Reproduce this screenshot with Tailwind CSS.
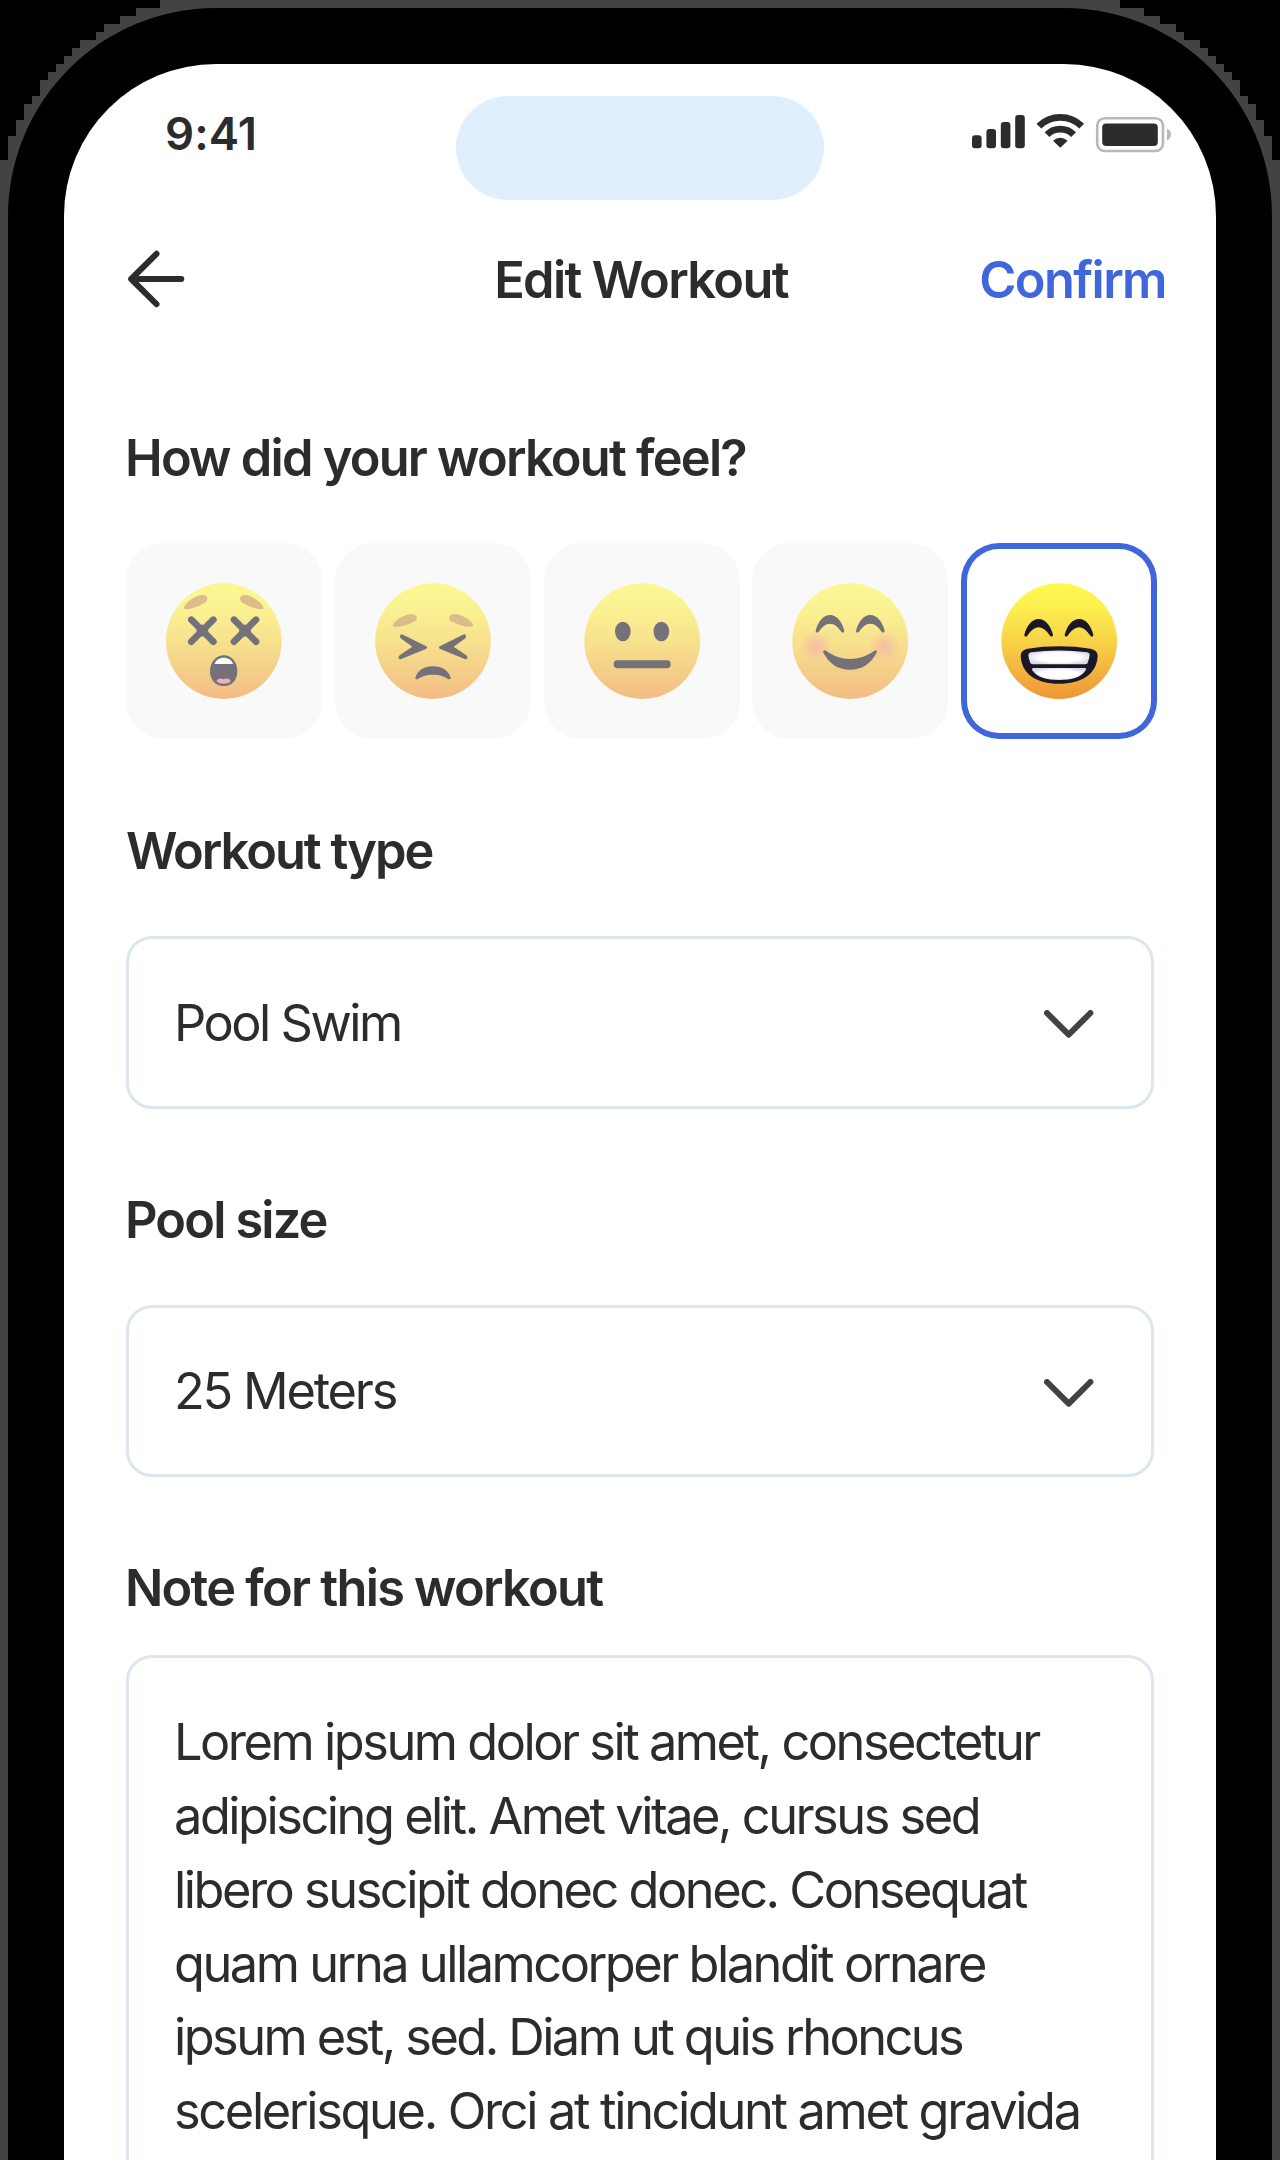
<!DOCTYPE html>
<html lang="en">
<head>
<meta charset="utf-8">
<title>Edit Workout</title>
<script src="https://cdn.jsdelivr.net/npm/@tailwindcss/browser@4"></script>
</head>
<body class="bg-black">
<div class="relative h-[2160px] w-[1280px] overflow-hidden bg-black font-['Inter',sans-serif] text-[50.5px] leading-[74px] whitespace-nowrap text-[#2c2c2c]">
  <!-- stepped outer edge of the device -->
  <svg class="absolute inset-0" width="1280" height="2160" viewBox="0 0 1280 2160" fill="#434343" shape-rendering="crispEdges">
    <path d="M160 0V8H136V16H120V24H104V32H96V40H80V48H72V56H64V64H56V72H48V80H40V96H32V104H24V120H16V136H8V160H0V2160H1280V160H1272V136H1264V120H1256V104H1248V96H1240V80H1232V72H1224V64H1216V56H1208V48H1200V40H1184V32H1176V24H1160V16H1144V8H1120V0Z"/>
  </svg>
  <div class="relative h-[2300px] p-2">
    <div class="h-full rounded-t-[208px] bg-black p-14">
      <main class="flex h-full flex-col rounded-t-[152px] bg-white pt-8">

        <div class="grid h-[104px] grid-cols-[392px_368px_1fr]">
          <span class="pl-[101px] text-[45.5px] leading-[75px] font-semibold tracking-[0.1px]">9:41</span>
          <div class="rounded-full bg-[#dfeffc]"></div>
          <svg class="mt-4 ml-[146px]" width="204" height="42" viewBox="970 112 204 42">
            <g fill="#2c2c2c">
              <rect x="972" y="135.2" width="9.6" height="13" rx="3"/>
              <rect x="986.4" y="129" width="9.6" height="19.2" rx="3"/>
              <rect x="1000.8" y="122" width="9.6" height="26.2" rx="3"/>
              <rect x="1015.2" y="115" width="9.6" height="33.2" rx="3"/>
              <rect x="1102.2" y="123.4" width="55.6" height="22.6" rx="4"/>
              <path d="M1060.3 147.8L1053 140.7Q1060.3 134.6 1067.6 140.7Z"/>
            </g>
            <g fill="none" stroke="#2c2c2c" stroke-width="6.8">
              <path d="M1038.9 126.1A30.6 30.6 0 0 1 1081.7 126.1"/>
              <path d="M1047 134.6A19 19 0 0 1 1073.6 134.6"/>
            </g>
            <rect x="1097.2" y="118.2" width="65.8" height="32.8" rx="7.5" fill="none" stroke="#b9b9b9" stroke-width="2.6"/>
            <path d="M1167 128.5Q1171 130.5 1171 134.5T1167 140.5Z" fill="#b9b9b9"/>
          </svg>
        </div>

        <header class="mt-[43px] grid grid-cols-[1fr_auto_1fr] items-center pr-[50px] pl-[52px]">
          <svg class="-mt-[2px] ml-[10px]" width="62" height="62" viewBox="126 248 62 62" fill="none" stroke="#2c2c2c" stroke-width="6" stroke-linecap="round" stroke-linejoin="round">
            <path d="M181.3 279H131.2M156.5 253.8L131.2 279L156.5 304.2"/>
          </svg>
          <h1 class="font-[560] tracking-[-1.65px]">Edit Workout</h1>
          <span class="justify-self-end font-[560] tracking-[-1.6px] text-[#4066db]">Confirm</span>
        </header>

        <section class="mt-[104px] flex flex-col pr-[59px] pl-[62px]">
          <h2 class="-ml-px font-[580] tracking-[-1.76px]">How did your workout feel?</h2>
          <div class="mt-[48px] flex h-[197px] items-start justify-between">
            <div class="size-[196px] rounded-[38px] bg-[#f9f9f9]">
              <svg class="size-full opacity-60" viewBox="48 70 588 588">
                <defs>
                  <linearGradient id="face" x1="0" y1="0" x2="0" y2="1">
                    <stop offset="0" stop-color="#fff84d"/>
                    <stop offset=".2" stop-color="#fcf04f"/>
                    <stop offset=".5" stop-color="#f7d347"/>
                    <stop offset=".78" stop-color="#f2b03f"/>
                    <stop offset="1" stop-color="#ef9536"/>
                  </linearGradient>
                </defs>
                <circle cx="341.5" cy="364.5" r="173.5" fill="url(#face)"/>
                <g fill="#cb9443">
                  <path d="M222 266C219 256 250 229 275 226C292 225 296 238 288 246C275 258 228 275 222 266Z"/>
                  <path d="M460 266C463 256 432 229 407 226C390 225 386 238 394 246C407 258 454 275 460 266Z"/>
                </g>
                <path d="M244 300L310 366M310 300L244 366M372 300L438 366M438 300L372 366" stroke="#1c1724" stroke-width="20" stroke-linecap="round"/>
                <path d="M277 314L296 333L277 352L258 333ZM405 314L424 333L405 352L386 333Z" fill="#1c1724"/>
                <path d="M341.5 407C366 407 382 428 382 455C382 482 366 499 341.5 499C317 499 300 482 300 455C300 428 317 407 341.5 407Z" fill="#1c1724"/>
                <path d="M314 433C320 408 362 408 369 433Z" fill="#fff"/>
                <path d="M320 485C322 475 334 475 341 479C348 475 360 475 362 485C356 495 326 495 320 485Z" fill="#ee7f94"/>
              </svg>
            </div>
            <div class="size-[196px] rounded-[38px] bg-[#f9f9f9]">
              <svg class="size-full opacity-60" viewBox="674 70 588 588">
                <circle cx="968" cy="364.5" r="173.5" fill="url(#face)"/>
                <g fill="#cb9443">
                  <path d="M848 319C845 309 876 285 902 283C919 283 924 296 916 303C902 313 855 328 848 319Z"/>
                  <path d="M1088 319C1091 309 1060 285 1034 283C1017 283 1012 296 1020 303C1034 313 1081 328 1088 319Z"/>
                </g>
                <g fill="#1c1724">
                  <path d="M878 345L948 380Q953 384 948 387L873 418Q866 420 865 415Q864 411 868 407L906 381L871 356Q867 351 870 346Q873 342 878 345Z"/>
                  <path d="M1058 345L988 380Q983 384 988 387L1063 418Q1070 420 1071 415Q1072 411 1068 407L1030 381L1065 356Q1069 351 1066 346Q1063 342 1058 345Z"/>
                  <path d="M915 475C921 453 940 440 968 440C996 440 1015 453 1021 475Q1020 481 1013 478C1000 469 988 465 968 465C948 465 936 469 923 478Q916 481 915 475Z"/>
                </g>
              </svg>
            </div>
            <div class="size-[196px] rounded-[38px] bg-[#f9f9f9]">
              <svg class="size-full opacity-60" viewBox="40 70 588 588">
                <circle cx="334.5" cy="364.5" r="173.5" fill="url(#face)"/>
                <g fill="#1c1724">
                  <ellipse cx="276.5" cy="335.5" rx="23.5" ry="29.5"/>
                  <ellipse cx="392" cy="335.5" rx="23.5" ry="29.5"/>
                  <rect x="249" y="422" width="171" height="23.5" rx="11"/>
                </g>
              </svg>
            </div>
            <div class="size-[196px] rounded-[38px] bg-[#f9f9f9]">
              <svg class="size-full opacity-60" viewBox="667 70 588 588">
                <defs>
                  <radialGradient id="blush">
                    <stop offset="0" stop-color="#f38a75" stop-opacity=".85"/>
                    <stop offset=".45" stop-color="#f38a75" stop-opacity=".45"/>
                    <stop offset="1" stop-color="#f38a75" stop-opacity="0"/>
                  </radialGradient>
                </defs>
                <circle cx="961.5" cy="364.5" r="173.5" fill="url(#face)"/>
                <circle cx="859" cy="380" r="50" fill="url(#blush)"/>
                <circle cx="1064" cy="380" r="50" fill="url(#blush)"/>
                <g fill="#1c1724">
                  <path d="M858 333C865 306 881 286 901 286C921 286 937 306 944 333Q944 341 936 338C925 322 914 312 901 312C888 312 877 322 866 338Q858 341 858 333Z"/>
                  <path d="M979 333C986 306 1002 286 1022 286C1042 286 1058 306 1065 333Q1065 341 1057 338C1046 322 1035 312 1022 312C1009 312 998 322 987 338Q979 341 979 333Z"/>
                  <path d="M880 396Q882 389 889 393C934 426 988 426 1034 393Q1041 389 1042 396C1026 431 997 450 961 450C925 450 896 431 880 396Z"/>
                </g>
              </svg>
            </div>
            <div class="size-[196px] rounded-[38px] bg-white ring-6 ring-[#4066db] ring-inset">
              <svg class="size-full" viewBox="64 70 588 588">
                <defs>
                  <radialGradient id="teeth" cx=".5" cy=".5" r=".55">
                    <stop offset=".6" stop-color="#fff"/>
                    <stop offset="1" stop-color="#d8d8e8"/>
                  </radialGradient>
                </defs>
                <circle cx="358.5" cy="364.5" r="173.5" fill="url(#face)"/>
                <g fill="#1c1724">
                  <path d="M254 345C261 318 277 298 297 298C317 298 333 318 340 345Q340 353 332 350C321 334 310 323 297 323C284 323 273 334 262 350Q254 353 254 345Z"/>
                  <path d="M375 345C382 318 398 298 419 298C439 298 454 318 461 345Q461 353 453 350C442 334 431 323 419 323C405 323 394 334 383 350Q375 353 375 345Z"/>
                  <path d="M358 380Q408 380 452 387Q474 391 474 408C472 464 424 492 358 492C292 492 245 464 243 408Q243 391 264 387Q308 380 358 380Z"/>
                </g>
                <g fill="url(#teeth)">
                  <path d="M266 406Q266 400 274 398Q358 387 443 398Q451 400 450 406Q448 420 444 430Q442 434 436 434H281Q274 434 272 430Q267 418 266 406Z"/>
                  <path d="M280 445H437Q441 446 438 452C424 473 398 481 358 481C319 481 293 473 278 452Q275 446 280 445Z"/>
                </g>
              </svg>
            </div>
          </div>
        </section>

        <section class="mt-[74px] flex flex-col pr-[62px] pl-[62px]">
          <h2 class="font-semibold tracking-[-2px]">Workout type</h2>
          <div class="mt-[48px] flex h-[173px] items-center justify-between rounded-[26px] border-3 border-[#dce6f0] pr-[57px] pl-[45px]">
            <span class="tracking-[-2.5px]">Pool Swim</span>
            <svg class="mt-[2px]" width="50" height="28" viewBox="1044 1010 50 28" fill="none" stroke="#424242" stroke-width="6" stroke-linecap="round" stroke-linejoin="round"><path d="M1047 1013L1068.7 1034.7L1090.4 1013"/></svg>
          </div>
        </section>

        <section class="mt-[74px] flex flex-col pr-[62px] pl-[62px]">
          <h2 class="-ml-px font-semibold tracking-[-1.85px]">Pool size</h2>
          <div class="mt-[48px] flex h-[172px] items-center justify-between rounded-[26px] border-3 border-[#dce6f0] pr-[57px] pl-[45px]">
            <span class="tracking-[-2.2px]">25 Meters</span>
            <svg class="mt-[3px]" width="50" height="28" viewBox="1044 1010 50 28" fill="none" stroke="#424242" stroke-width="6" stroke-linecap="round" stroke-linejoin="round"><path d="M1047 1013L1068.7 1034.7L1090.4 1013"/></svg>
          </div>
        </section>

        <section class="mt-[74px] flex flex-1 flex-col pr-[62px] pl-[62px]">
          <h2 class="-ml-px font-semibold tracking-[-1.74px]">Note for this workout</h2>
          <p class="mt-[30px] flex-1 rounded-[26px] border-3 border-[#dce6f0] pt-[47px] pl-[45px] leading-[73.85px] tracking-[-2.48px]">Lorem ipsum dolor sit amet, consectetur<br>adipiscing elit. Amet vitae, cursus sed<br>libero suscipit donec donec. Consequat<br>quam urna ullamcorper blandit ornare<br><span class="tracking-[-2.56px]">ipsum est, sed. Diam ut quis rhoncus</span><br><span class="tracking-[-2.35px]">scelerisque. Orci at tincidunt amet gravida</span></p>
        </section>
      </main>
    </div>
  </div>
</div>
</body>
</html>
